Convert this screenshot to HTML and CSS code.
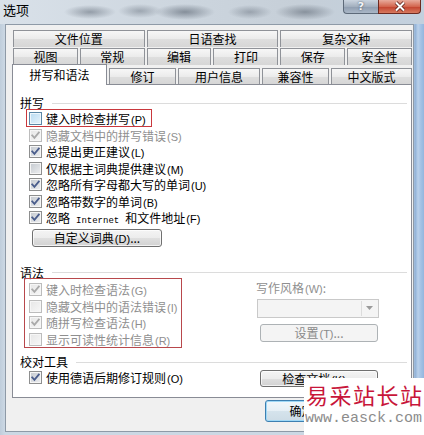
FILE: index.html
```html
<!DOCTYPE html>
<html lang="zh-CN">
<head>
<meta charset="utf-8">
<title>选项</title>
<link rel="stylesheet" href="styles.css">
</head>
<body>
<div class="window">
  <div class="titlebar">
    <span class="title">选项</span>
    <div class="controls">
      <span class="ctl help">?</span>
      <span class="ctl close"><svg viewBox="0 0 14 11" width="14" height="11"><path class="xo" d="M3 1.5L11 9.5M11 1.5L3 9.5"/><path class="xi" d="M3 1.5L11 9.5M11 1.5L3 9.5"/></svg></span>
    </div>
  </div>

  <div class="client">
    <div class="tabrow r1">
      <div class="tab">文件位置</div>
      <div class="tab">日语查找</div>
      <div class="tab">复杂文种</div>
    </div>
    <div class="tabrow r2">
      <div class="tab">视图</div>
      <div class="tab">常规</div>
      <div class="tab">编辑</div>
      <div class="tab">打印</div>
      <div class="tab">保存</div>
      <div class="tab">安全性</div>
    </div>
    <div class="tabrow r3">
      <div class="tab sel">拼写和语法</div>
      <div class="tab w67">修订</div>
      <div class="tab w82">用户信息</div>
      <div class="tab w67">兼容性</div>
      <div class="tab fill">中文版式</div>
    </div>

    <div class="panel">
      <div class="hdr"><span>拼写</span><i class="sep"></i></div>
      <div class="sbox">
        <div class="row"><span class="cb focus"></span><span>键入时检查拼写<span class="acc">(P)</span></span></div>
      </div>
      <div class="row dis"><span class="cb"><svg viewBox="0 0 11 11" width="11" height="11"><path d="M2.2 5.4L4.4 7.8L8.8 2.6"/></svg></span><span>隐藏文档中的拼写错误<span class="acc">(S)</span></span></div>
      <div class="row"><span class="cb"><svg viewBox="0 0 11 11" width="11" height="11"><path d="M2.2 5.4L4.4 7.8L8.8 2.6"/></svg></span><span>总提出更正建议<span class="acc">(L)</span></span></div>
      <div class="row"><span class="cb"></span><span>仅根据主词典提供建议<span class="acc">(M)</span></span></div>
      <div class="row"><span class="cb"><svg viewBox="0 0 11 11" width="11" height="11"><path d="M2.2 5.4L4.4 7.8L8.8 2.6"/></svg></span><span>忽略所有字母都大写的单词<span class="acc">(U)</span></span></div>
      <div class="row"><span class="cb"><svg viewBox="0 0 11 11" width="11" height="11"><path d="M2.2 5.4L4.4 7.8L8.8 2.6"/></svg></span><span>忽略带数字的单词<span class="acc">(B)</span></span></div>
      <div class="row"><span class="cb"><svg viewBox="0 0 11 11" width="11" height="11"><path d="M2.2 5.4L4.4 7.8L8.8 2.6"/></svg></span><span>忽略<span class="mono">Internet</span>和文件地址<span class="acc">(F)</span></span></div>
      <div class="btn dict">自定义词典<span class="acc">(D)</span>...</div>

      <div class="hdr h-gram"><span>语法</span><i class="sep"></i></div>
      <div class="grid grammar">
        <div class="gbox">
          <div class="row dis"><span class="cb"><svg viewBox="0 0 11 11" width="11" height="11"><path d="M2.2 5.4L4.4 7.8L8.8 2.6"/></svg></span><span>键入时检查语法<span class="acc">(G)</span></span></div>
          <div class="row dis"><span class="cb"></span><span>隐藏文档中的语法错误<span class="acc">(I)</span></span></div>
          <div class="row dis"><span class="cb"><svg viewBox="0 0 11 11" width="11" height="11"><path d="M2.2 5.4L4.4 7.8L8.8 2.6"/></svg></span><span>随拼写检查语法<span class="acc">(H)</span></span></div>
          <div class="row dis"><span class="cb"></span><span>显示可读性统计信息<span class="acc">(R)</span></span></div>
        </div>
        <div class="gright">
          <div class="wlabel">写作风格<span class="acc">(W)</span>:</div>
          <div class="combo"><span class="arrowbtn"><svg viewBox="0 0 7 4" width="7" height="4"><path d="M0 0H7L3.5 4Z"/></svg></span></div>
          <div class="btn disabled set">设置<span class="acc">(T)</span>...</div>
        </div>
      </div>

      <div class="hdr h-proof"><span>校对工具</span><i class="sep"></i></div>
      <div class="grid proof">
        <div class="row"><span class="cb"><svg viewBox="0 0 11 11" width="11" height="11"><path d="M2.2 5.4L4.4 7.8L8.8 2.6"/></svg></span><span>使用德语后期修订规则<span class="acc">(O)</span></span></div>
        <div class="btn check">检查文档<span class="acc">(K)</span>...</div>
      </div>
    </div>

    <div class="footer">
      <div class="btn default">确定</div>
      <div class="btn">取消</div>
    </div>
  </div>

  <div class="watermark">
    <div class="wm1">易采站长站</div>
    <div class="wm2">www.easck.com</div>
  </div>
</div>
</body>
</html>
```

FILE: styles.css
```css
* { box-sizing: border-box; }
html, body { margin: 0; padding: 0; }
body {
  width: 424px;
  height: 435px;
  overflow: hidden;
  font-family: "Noto Sans CJK SC", "Noto Sans", sans-serif;
  font-size: 12px;
  color: #000;
}
.window {
  position: relative;
  width: 424px;
  height: 435px;
  display: flex;
  flex-direction: column;
  background: linear-gradient(to right, #bfcddb 0, #ccd8e4 5px, #ccd8e4 413px, #8fb0d6 415px, #b9d0ea 418px, #a3c1e4 421px, #94b6de 424px);
}

/* title bar */
.titlebar {
  height: 24px;
  flex: none;
  display: flex;
  justify-content: space-between;
  align-items: flex-start;
  padding: 0 3px;
  background:
    radial-gradient(ellipse 26px 7px at 90px 12px, rgba(95,105,118,.55), rgba(95,105,118,0)),
    radial-gradient(ellipse 22px 7px at 140px 11px, rgba(95,105,118,.45), rgba(95,105,118,0)),
    radial-gradient(ellipse 30px 8px at 185px 12px, rgba(85,95,108,.6), rgba(85,95,108,0)),
    radial-gradient(ellipse 22px 7px at 250px 12px, rgba(95,105,118,.45), rgba(95,105,118,0)),
    radial-gradient(ellipse 30px 8px at 305px 12px, rgba(85,95,108,.55), rgba(85,95,108,0)),
    linear-gradient(to right, #d9e1e9, #ccd5de 45%, #c6cfd8 70%, #c2d0de);
}
.title {
  font-size: 13px;
  line-height: 20px;
  color: #000;
}
.controls { display: flex; }
.ctl {
  height: 14px;
  display: flex;
  align-items: center;
  justify-content: center;
}
.help {
  width: 35px;
  border: 1px solid #5d6a79;
  border-top: none;
  border-right: none;
  border-radius: 0 0 0 4px;
  background: linear-gradient(#cbd5e0, #a3b0bf 50%, #8e9db0 51%, #aab7c6);
  color: #f4f6f8;
  font-family: "DejaVu Sans", sans-serif;
  font-weight: bold;
  font-size: 11px;
  line-height: 12px;
  text-shadow: 0 0 2px #3c4654;
}
.close {
  width: 43px;
  border: 1px solid #6d2a21;
  border-top: none;
  border-radius: 0 0 4px 0;
  background: linear-gradient(#e8ab9c, #d3664f 50%, #c2402c 51%, #d77a5f);
}
.close .xo { fill: none; stroke: #5a2019; stroke-width: 3.6; }
.close .xi { fill: none; stroke: #fff; stroke-width: 2; }

/* client */
.client {
  flex: 1;
  margin: 0 10px 3px 5px;
  background: #f0f0f0;
  border: 1px solid #8e9aa7;
  padding: 5px 1px 0 6px;
  display: flex;
  flex-direction: column;
}
.tabrow {
  display: flex;
  gap: 2px;
  margin-left: 1px;
  flex: none;
}
.r1, .r2 { height: 17px; }
.r2 { margin-top: 1px; }
.r3 { height: 19px; align-items: flex-end; }
.tab {
  flex: 1;
  height: 17px;
  border: 1px solid #8f9298;
  border-bottom: none;
  background: linear-gradient(#f7f7f7, #ebebeb 50%, #dedede 51%, #d6d6d6);
  text-align: center;
  line-height: 16px;
  white-space: nowrap;
}
.r3 .tab { flex: none; height: 16px; line-height: 15px; }
.r3 .fill { flex: 1; }
.w67 { width: 67px; }
.w82 { width: 82px; }
.r3 .sel {
  width: 95px;
  height: 21px;
  margin-left: -1px;
  margin-bottom: -1px;
  background: #fff;
  border-color: #898c95;
  line-height: 20px;
  position: relative;
  z-index: 1;
}

/* panel */
.panel {
  height: 314px;
  flex: none;
  background: #fff;
  border: 1px solid #898c95;
  padding-top: 11px;
}
.hdr {
  display: flex;
  align-items: center;
  height: 14px;
  line-height: 14px;
  padding-left: 7px;
}
.hdr .sep {
  flex: 1;
  height: 1px;
  background: #dcdcdc;
  margin: 0 4px 0 8px;
}
.h-gram { margin-top: 19px; }
.h-proof { margin-top: 7px; }

.row {
  height: 16.4px;
  display: flex;
  align-items: center;
  gap: 4px;
  padding-left: 16px;
  white-space: nowrap;
}
.row.dis { color: #8f8f8f; }
.acc {
  font-family: "Liberation Sans", sans-serif;
  font-size: 11px;
  margin-left: 1px;
}
.mono {
  font-family: "Liberation Mono", monospace;
  font-size: 9px;
  margin: 0 6px;
}

.sbox {
  width: max-content;
  margin: -1px 0 0 13px;
  border: 1px solid #c9383d;
  padding: 0 5px 0 2px;
}
.sbox .row, .gbox .row { padding-left: 0; }

/* checkbox */
.cb {
  flex: none;
  width: 13px;
  height: 13px;
  border: 1px solid #8e8f8f;
  background: linear-gradient(135deg, #c4c9cf, #eeeff1);
  box-shadow: inset 0 0 0 1px #f6f6f6;
  display: block;
}
.cb svg { display: block; }
.cb path { fill: none; stroke: #4a5d8c; stroke-width: 1.8; stroke-linecap: square; }
.cb.focus {
  border-color: #5b87a6;
  background: linear-gradient(135deg, #b9dbf2, #e6f3fb);
  box-shadow: inset 0 0 0 1px #eef7fd;
}
.dis .cb {
  border-color: #bcbcbc;
  background: linear-gradient(135deg, #e6e6e6, #f7f7f7);
}
.dis .cb path { stroke: #a9a9a9; }

/* buttons */
.btn {
  height: 18px;
  border: 1px solid #707070;
  border-radius: 3px;
  background: linear-gradient(#f4f4f4, #ececec 50%, #dfdfdf 51%, #d2d2d2);
  box-shadow: inset 0 0 0 1px rgba(255,255,255,.7);
  text-align: center;
  line-height: 16px;
  white-space: nowrap;
}
.btn.disabled {
  border-color: #adb2b5;
  background: #f4f4f4;
  color: #8a8a8a;
  box-shadow: none;
}
.dict {
  width: 130px;
  margin: 3px 0 0 19px;
}

.grid {
  display: grid;
  grid-template-columns: 243px 123px;
  align-items: start;
}
.gbox {
  width: max-content;
  margin: -2px 0 0 11px;
  border: 1px solid #b8484c;
  padding: 3px 4px 0 4px;
}
.gright { padding-top: 1px; }
.wlabel {
  line-height: 14px;
  color: #8f8f8f;
}
.combo {
  margin: 3px 0 0 1px;
  width: 122px;
  height: 19px;
  border: 1px solid #c9c9c9;
  background: #f4f4f4;
  display: flex;
  justify-content: flex-end;
  padding: 1px;
}
.arrowbtn {
  width: 16px;
  border-left: 1px solid #dcdcdc;
  display: flex;
  align-items: center;
  justify-content: center;
}
.arrowbtn svg { display: block; }
.arrowbtn path { fill: #9a9a9a; }
.set {
  width: 118px;
  margin: 6px 0 0 4px;
}
.proof .row { margin-top: 0; }
.check {
  width: 118px;
  height: 17px;
  line-height: 15px;
  margin: 1px 0 0 4px;
}

/* footer */
.footer {
  display: flex;
  gap: 6px;
  padding: 2px 0 0 253px;
}
.footer .btn {
  width: 73px;
  height: 22px;
  line-height: 20px;
  flex: none;
}
.footer .default {
  border-color: #3c7fb1;
  box-shadow: inset 0 0 0 1px #9fd8f6;
  background: linear-gradient(#f1f7fb, #e6eff5 50%, #d5e3ec 51%, #cddce6);
}

/* watermark overlay */
.watermark {
  position: absolute;
  left: 304px;
  top: 378px;
  width: 120px;
  height: 57px;
  background: #fff;
}
.wm1 {
  margin-top: 3px;
  padding-left: 2px;
  color: #c8163a;
  font-size: 22px;
  line-height: 26px;
  letter-spacing: 1.5px;
  white-space: nowrap;
}
.wm2 {
  margin-top: 4px;
  padding-left: 1px;
  color: #8c8c8c;
  font-family: "Liberation Mono", monospace;
  font-size: 15px;
  line-height: 16px;
  white-space: nowrap;
}
```
